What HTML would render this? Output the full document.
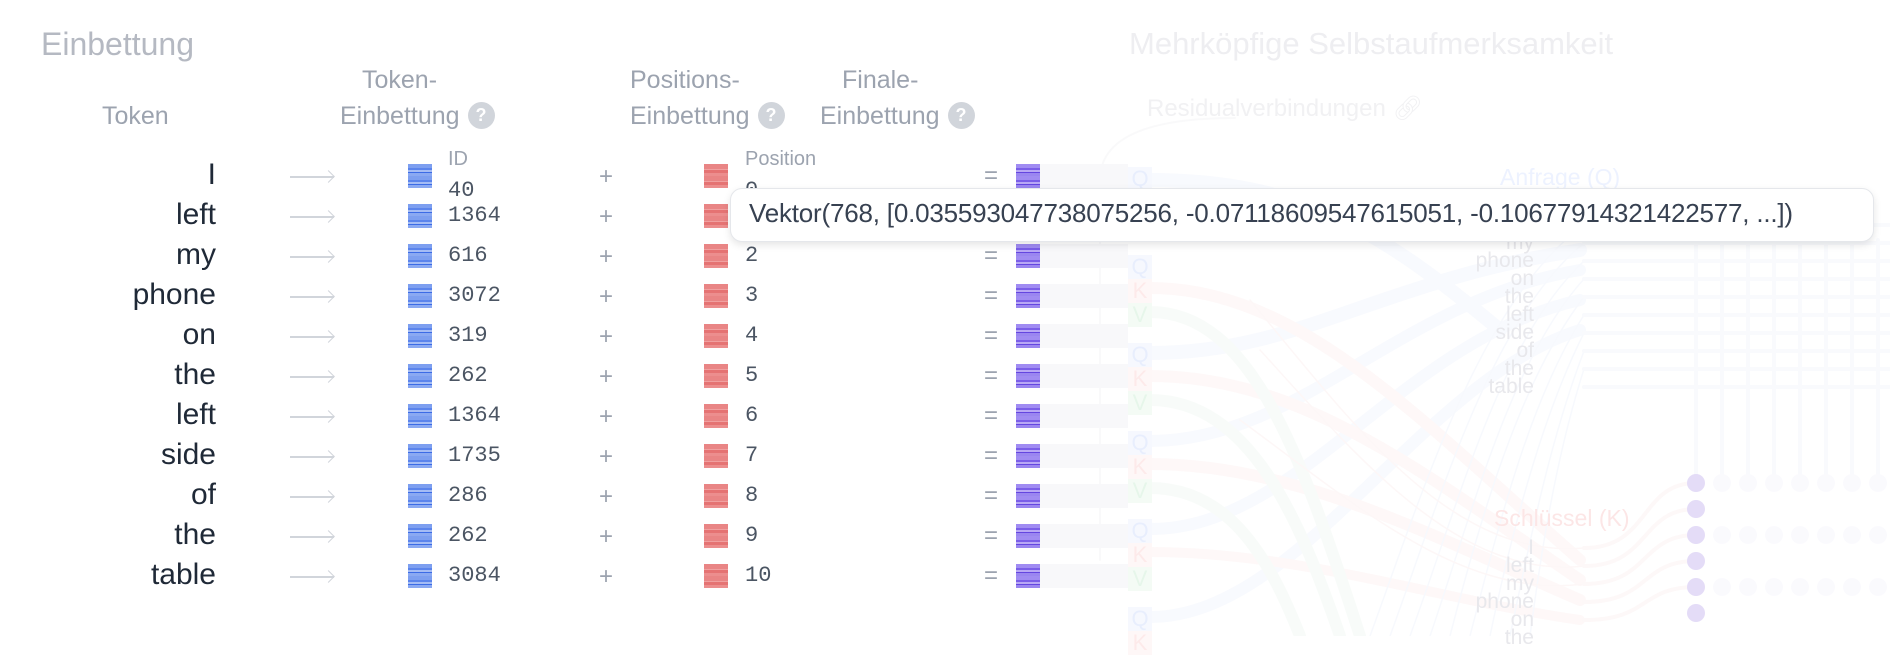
<!DOCTYPE html>
<html><head><meta charset="utf-8"><style>
body{margin:0;width:1890px;height:636px;background:#fff;overflow:hidden;position:relative;font-family:"Liberation Sans",sans-serif}
.a{position:absolute;white-space:nowrap}
.h{color:#9ca3af;font-size:25px}
.q{display:inline-block;width:27px;height:27px;border-radius:50%;background:#d1d5db;color:#fff;font-size:18px;font-weight:bold;text-align:center;line-height:27px;vertical-align:middle;margin-left:8px;position:relative;top:-2px}
.tok{color:#1f2937;font-size:30px;text-align:right;width:200px;left:16px}
.num{font-family:"Liberation Mono",monospace;font-size:22px;color:#4b5563}
.sq{position:absolute;width:24px;height:24px}
.b{background:repeating-linear-gradient(180deg,#7d9ff0 0 4px,#5b84ec 4px 6px,#a4bcf5 6px 8px,#3b6be6 8px 9px,#8aa9f2 9px 12px)}
.r{background:repeating-linear-gradient(180deg,#e98585 0 5px,#f0a0a0 5px 6px,#e57373 6px 9px,#ec8e8e 9px 12px)}
.p{background:repeating-linear-gradient(180deg,#a08cf2 0 4px,#7a5ee8 4px 6px,#b8a8f5 6px 8px,#6446e0 8px 9px,#9a86f0 9px 12px)}
.ar{position:absolute;width:44px;height:1.5px;background:#d1d5db;left:290px}
.ar:after{content:"";position:absolute;top:-4px;width:8px;height:8px;border-top:1.5px solid #d1d5db;border-right:1.5px solid #d1d5db;transform:rotate(45deg);right:1px}
.op{color:#9ca3af;font-size:24px}
.gb{position:absolute;left:1040px;width:88px;height:24px;background:#f8f8fa}
.l{color:#e8e8ec;font-size:21px;text-align:right;line-height:18px}
</style></head><body>
<svg class="a" style="left:0;top:0;opacity:0.45" width="1890" height="636">
<g fill="none" stroke-linecap="round">
<path d="M1235 118 Q1100 118 1100 180 L1100 560" stroke="#f3f3f5" stroke-width="2"/>
<path d="M1150 180 C1300 180 1380 230 1500 330" stroke="#f1f4fd" stroke-width="14"/>
<path d="M1150 353 C1300 353 1380 280 1580 250" stroke="#f1f4fd" stroke-width="14"/>
<path d="M1150 441 C1300 441 1400 300 1580 270" stroke="#f1f4fd" stroke-width="12"/>
<path d="M1150 529 C1300 529 1400 340 1580 300" stroke="#f1f4fd" stroke-width="12"/>
<path d="M1150 617 C1300 617 1420 380 1580 330" stroke="#f1f4fd" stroke-width="12"/>
<path d="M1150 288 C1300 288 1420 420 1580 560" stroke="#fdf1f1" stroke-width="12"/>
<path d="M1150 376 C1300 376 1420 470 1580 580" stroke="#fdf1f1" stroke-width="12"/>
<path d="M1150 464 C1300 464 1440 540 1580 600" stroke="#fdf1f1" stroke-width="12"/>
<path d="M1150 552 C1300 552 1440 600 1580 620" stroke="#fdf1f1" stroke-width="10"/>
<path d="M1150 312 C1250 312 1300 450 1360 636" stroke="#f0f8f2" stroke-width="12"/>
<path d="M1150 400 C1250 400 1300 520 1340 636" stroke="#f0f8f2" stroke-width="12"/>
<path d="M1150 488 C1230 488 1270 560 1300 636" stroke="#f0f8f2" stroke-width="12"/>
<g stroke="#eef2fc" stroke-width="1.5">
<path d="M1370 636 C1420 500 1480 300 1584 225"/><path d="M1390 636 C1440 500 1490 320 1584 243"/>
<path d="M1410 636 C1460 500 1500 340 1584 261"/><path d="M1430 636 C1470 520 1510 360 1584 279"/>
<path d="M1450 636 C1480 520 1520 380 1584 297"/><path d="M1470 636 C1500 520 1530 400 1584 315"/>
<path d="M1490 636 C1510 540 1540 420 1584 333"/><path d="M1510 636 C1530 540 1550 440 1584 351"/>
<path d="M1530 636 C1540 560 1555 460 1584 369"/>
</g>
<g stroke="#fbeeee" stroke-width="1.5">
<path d="M1250 300 C1350 420 1450 560 1584 548"/><path d="M1260 350 C1360 460 1460 580 1584 566"/>
<path d="M1240 420 C1350 500 1460 600 1584 584"/>
</g>
<g stroke="#f2f4fc" stroke-width="4">
<path d="M1584 225 L1890 225"/><path d="M1584 243 L1890 243"/><path d="M1584 261 L1890 261"/><path d="M1584 279 L1890 279"/><path d="M1584 297 L1890 297"/><path d="M1584 315 L1890 315"/><path d="M1584 333 L1890 333"/><path d="M1584 351 L1890 351"/><path d="M1584 369 L1890 369"/><path d="M1584 387 L1890 387"/>
<path d="M1696 240 L1696 480"/><path d="M1722 240 L1722 480"/><path d="M1748 240 L1748 480"/><path d="M1774 240 L1774 480"/><path d="M1800 240 L1800 480"/><path d="M1826 240 L1826 480"/><path d="M1852 240 L1852 480"/><path d="M1878 240 L1878 480"/>
</g>
<g stroke="#fbf0f0" stroke-width="4">
<path d="M1584 548 C1650 548 1640 483 1696 483"/><path d="M1584 566 C1650 566 1640 509 1696 509"/><path d="M1584 584 C1650 584 1640 535 1696 535"/><path d="M1584 602 C1650 602 1640 561 1696 561"/><path d="M1584 620 C1650 620 1640 587 1696 587"/>
</g>
</g>
<g fill="#f6f4fc">
<circle cx="1722" cy="483" r="9"/><circle cx="1748" cy="483" r="9"/><circle cx="1774" cy="483" r="9"/><circle cx="1800" cy="483" r="9"/><circle cx="1826" cy="483" r="9"/><circle cx="1852" cy="483" r="9"/><circle cx="1878" cy="483" r="9"/>
<circle cx="1722" cy="535" r="9"/><circle cx="1748" cy="535" r="9"/><circle cx="1774" cy="535" r="9"/><circle cx="1800" cy="535" r="9"/><circle cx="1826" cy="535" r="9"/><circle cx="1852" cy="535" r="9"/><circle cx="1878" cy="535" r="9"/>
<circle cx="1722" cy="587" r="9"/><circle cx="1748" cy="587" r="9"/><circle cx="1774" cy="587" r="9"/><circle cx="1800" cy="587" r="9"/><circle cx="1826" cy="587" r="9"/><circle cx="1852" cy="587" r="9"/><circle cx="1878" cy="587" r="9"/>
</g>
</svg>
<svg class="a" style="left:0;top:0" width="1890" height="636"><g fill="#e4dcf7"><circle cx="1696" cy="483" r="9"/><circle cx="1696" cy="509" r="9"/><circle cx="1696" cy="535" r="9"/><circle cx="1696" cy="561" r="9"/><circle cx="1696" cy="587" r="9"/><circle cx="1696" cy="613" r="9"/></g></svg>

<div class="a" style="left:41px;top:26px;font-size:32px;color:#b5b9c2">Einbettung</div>
<div class="a" style="left:1129px;top:26px;font-size:31px;color:#eeeef1">Mehrköpfige Selbstaufmerksamkeit</div>
<div class="a" style="left:1147px;top:94px;font-size:24px;color:#f1f1f3">Residualverbindungen &#x1F517;&#xFE0E;</div>
<div class="a" style="left:1500px;top:164px;font-size:23px;color:#edf2ff">Anfrage (Q)</div>
<div class="a" style="left:1494px;top:505px;font-size:23px;color:#fce6e6">Schlüssel (K)</div>
<div class="a l" style="right:356px;top:198px">I<br>left<br>my<br>phone<br>on<br>the<br>left<br>side<br>of<br>the<br>table</div>
<div class="a l" style="right:356px;top:539px">I<br>left<br>my<br>phone<br>on<br>the</div>

<div class="a h" style="left:102px;top:102px">Token</div>
<div class="a h" style="left:362px;top:66px">Token-</div>
<div class="a h" style="left:340px;top:102px">Einbettung<span class="q">?</span></div>
<div class="a h" style="left:630px;top:66px">Positions-</div>
<div class="a h" style="left:630px;top:102px">Einbettung<span class="q">?</span></div>
<div class="a h" style="left:842px;top:66px">Finale-</div>
<div class="a h" style="left:820px;top:102px">Einbettung<span class="q">?</span></div>
<div class="a" style="left:448px;top:148px;font-size:20px;color:#9ca3af">ID</div>
<div class="a" style="left:745px;top:148px;font-size:20px;color:#9ca3af">Position</div>

<div id="rows"></div>
<script>
var t=["I","left","my","phone","on","the","left","side","of","the","table"];
var id=[40,1364,616,3072,319,262,1364,1735,286,262,3084];
var h="";
for(var i=0;i<11;i++){var c=176+40*i;
h+='<div class="a tok" style="top:'+(c-18)+'px">'+t[i]+'</div>';
h+='<div class="ar" style="top:'+c+'px"></div>';
h+='<div class="sq b" style="left:408px;top:'+(c-12)+'px"></div>';
h+='<div class="a num" style="left:448px;top:'+(i==0?c+2:c-13)+'px">'+id[i]+'</div>';
h+='<div class="a op" style="left:599px;top:'+(c-13)+'px">+</div>';
h+='<div class="sq r" style="left:704px;top:'+(c-12)+'px"></div>';
h+='<div class="a num" style="left:745px;top:'+(i==0?c+2:c-13)+'px">'+i+'</div>';
h+='<div class="a op" style="left:984px;top:'+(c-14)+'px">=</div>';
h+='<div class="gb" style="top:'+(c-12)+'px"></div>';
h+='<div class="sq p" style="left:1016px;top:'+(c-12)+'px"></div>';
}
var L=["Q","K","V"],C=["#e8eefd","#fdeaea","#e6f6ea"],B=["#f6f8fe","#fef7f7","#f4fbf5"];
for(var j=0;j<6;j++)for(var k=0;k<3;k++){var y=167+88*j+24*k;if(y>640)continue;
h+='<div class="a" style="left:1128px;top:'+y+'px;width:24px;height:24px;background:'+B[k]+';color:'+C[k]+';font-size:22px;text-align:center;line-height:24px">'+L[k]+'</div>';}
document.getElementById("rows").innerHTML=h;
</script>

<div class="a" style="left:730px;top:188px;width:1142px;height:52px;background:#fff;border:1px solid #e5e7eb;border-radius:12px;box-shadow:0 3px 8px rgba(0,0,0,0.10)"></div>
<div class="a" style="left:749px;top:198px;font-size:26px;color:#374151;letter-spacing:-0.2px">Vektor(768, [0.035593047738075256, -0.07118609547615051, -0.10677914321422577, ...])</div>
</body></html>
